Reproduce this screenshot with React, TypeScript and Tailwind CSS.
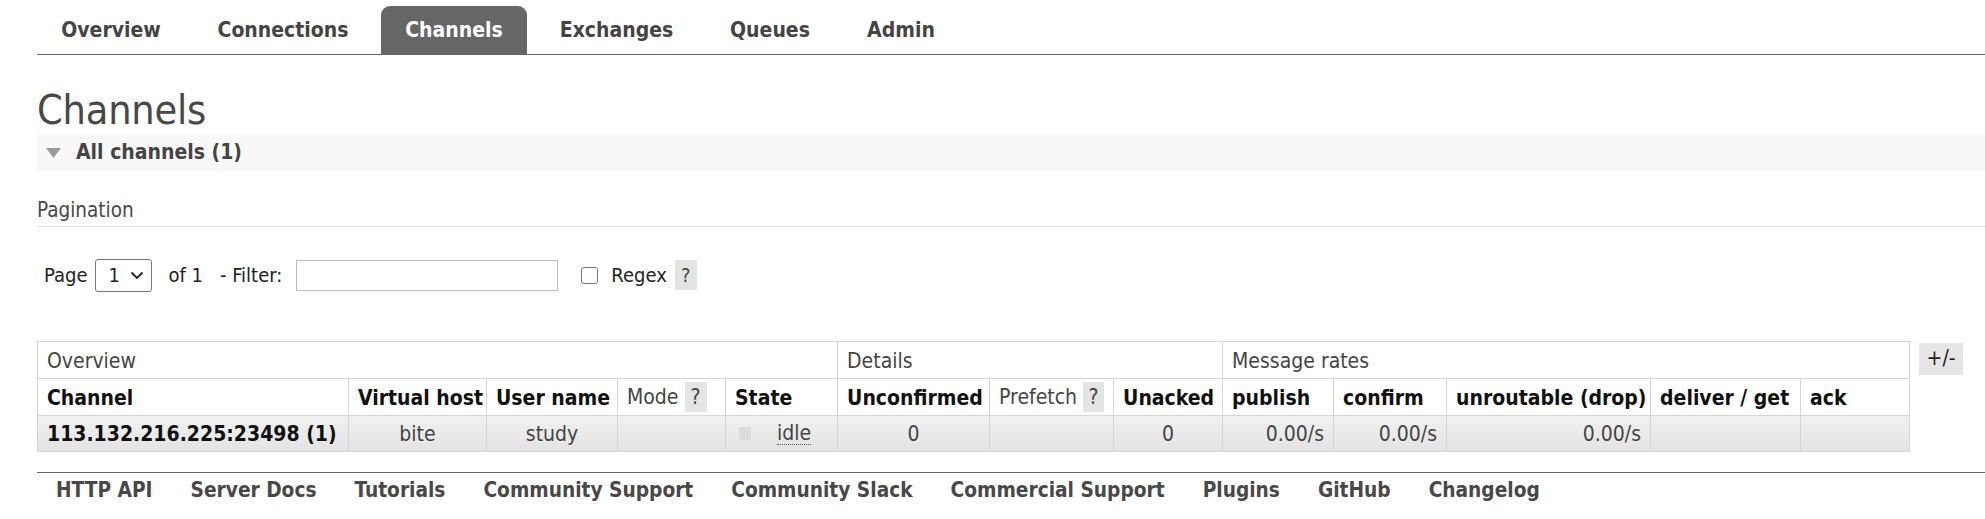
import React from "react";

const tabs = [
  { label: "Overview", w: "w-[148px]" },
  { label: "Connections", w: "w-[178px]" },
  { label: "Channels", w: "w-[146px]", active: true },
  { label: "Exchanges", w: "w-[161px]" },
  { label: "Queues", w: "w-[128px]" },
  { label: "Admin", w: "w-[116px]" },
];

const footer = [
  "HTTP API",
  "Server Docs",
  "Tutorials",
  "Community Support",
  "Community Slack",
  "Commercial Support",
  "Plugins",
  "GitHub",
  "Changelog",
];

function Help() {
  return (
    <span className="inline-flex items-center justify-center w-[22px] h-[30px] bg-[#e4e4e4] text-[#444] font-normal ml-[6px]">
      ?
    </span>
  );
}

export default function App() {
  const cell = "border border-[#d4d4d4] px-[9px]";
  return (
    <div className="min-h-[519px] bg-white text-[#484848] font-['DejaVu_Sans_Condensed','DejaVu_Sans',sans-serif] text-[20px]">
      {/* tabs */}
      <div className="pt-[6px] pl-[37px]">
        <div className="flex gap-[9px] border-b border-[#666]">
          {tabs.map((t) => (
            <div
              key={t.label}
              className={`${t.w} h-[48px] pt-[2px] flex items-center justify-center font-bold text-[21px] rounded-t-[9px] ${
                t.active ? "bg-[#666] text-white" : "text-[#444]"
              }`}
            >
              {t.label}
            </div>
          ))}
        </div>
      </div>

      <div className="pl-[37px]">
        <h1 className="text-[41px] leading-[48px] font-normal text-[#484848] mt-[31px] tracking-[-0.2px]">
          Channels
        </h1>
        <div className="h-[37px] bg-[#f8f8f8] flex items-center">
          <svg width="15" height="10" viewBox="0 0 15 10" className="ml-[9px] mr-[15px]">
            <polygon points="0,0 15,0 7.5,10" fill="#9a9a9a" />
          </svg>
          <span className="font-bold text-[21px] text-[#444]">All channels (1)</span>
        </div>

        <div className="mt-[27px] pb-[4px] border-b border-[#e2e2e2] text-[20.5px] leading-[24px]">
          Pagination
        </div>

        <div className="flex items-center h-[34px] mt-[31px] pl-[7px] text-[20px] text-[#222]">
          <span>Page</span>
          <div className="ml-[8px] w-[57px] h-[33px] border border-[#767676] rounded-[3px] flex items-center pl-[12px] gap-[10px]">
            <span>1</span>
            <svg width="14" height="9" viewBox="0 0 14 9">
              <polyline points="1.5,1.5 7,7 12.5,1.5" fill="none" stroke="#222" strokeWidth="1.8" />
            </svg>
          </div>
          <span className="ml-[16px]">of 1</span>
          <span className="ml-[17px]">- Filter:</span>
          <div className="ml-[14px] w-[262px] h-[31px] border border-[#bdbdbd]" />
          <div className="ml-[23px] w-[17px] h-[17px] border border-[#767676] rounded-[3px]" />
          <span className="ml-[13px]">Regex</span>
          <span className="ml-[8px] inline-flex items-center justify-center w-[22px] h-[30px] bg-[#e4e4e4] text-[#444]">
            ?
          </span>
        </div>

        <div className="flex items-start mt-[49px]">
          <table className="table-fixed border-collapse w-[1872px] text-[21px]">
            <colgroup>
              <col className="w-[311px]" />
              <col className="w-[138px]" />
              <col className="w-[131px]" />
              <col className="w-[108px]" />
              <col className="w-[112px]" />
              <col className="w-[152px]" />
              <col className="w-[124px]" />
              <col className="w-[109px]" />
              <col className="w-[111px]" />
              <col className="w-[113px]" />
              <col className="w-[204px]" />
              <col className="w-[150px]" />
              <col className="w-[109px]" />
            </colgroup>
            <thead>
              <tr className="h-[37px] text-left text-[#444] leading-[28px]">
                <th colSpan={5} className={`${cell} font-normal pt-[1px]`}>Overview</th>
                <th colSpan={3} className={`${cell} font-normal pt-[1px]`}>Details</th>
                <th colSpan={5} className={`${cell} font-normal pt-[1px]`}>Message rates</th>
              </tr>
              <tr className="h-[37px] text-left text-[#111] whitespace-nowrap leading-[28px]">
                <th className={`${cell} font-bold pt-[2px]`}>Channel</th>
                <th className={`${cell} font-bold pt-[2px]`}>Virtual host</th>
                <th className={`${cell} font-bold pt-[2px]`}>User name</th>
                <th className={`${cell} font-normal text-[#444]`}>
                  <span className="flex items-center">Mode<Help /></span>
                </th>
                <th className={`${cell} font-bold pt-[2px]`}>State</th>
                <th className={`${cell} font-bold pt-[2px]`}>Unconfirmed</th>
                <th className={`${cell} font-normal text-[#444]`}>
                  <span className="flex items-center">Prefetch<Help /></span>
                </th>
                <th className={`${cell} font-bold pt-[2px]`}>Unacked</th>
                <th className={`${cell} font-bold pt-[2px]`}>publish</th>
                <th className={`${cell} font-bold pt-[2px]`}>confirm</th>
                <th className={`${cell} font-bold pt-[2px]`}>unroutable (drop)</th>
                <th className={`${cell} font-bold pt-[2px]`}>deliver / get</th>
                <th className={`${cell} font-bold pt-[2px]`}>ack</th>
              </tr>
            </thead>
            <tbody>
              <tr className="h-[36px] bg-gradient-to-b from-[#f1f1f1] to-[#e3e3e3] text-[#444] whitespace-nowrap leading-[28px]">
                <td className={`${cell} font-bold text-[#111]`}>113.132.216.225:23498 (1)</td>
                <td className={`${cell} text-center`}>bite</td>
                <td className={`${cell} text-center`}>study</td>
                <td className={cell}></td>
                <td className={cell}>
                  <span className="flex items-center">
                    <span className="w-[12px] h-[13px] bg-[#dcdcdc] ml-[4px]" />
                    <span className="ml-[26px] border-b border-dotted border-[#555] leading-[22px]">idle</span>
                  </span>
                </td>
                <td className={`${cell} text-center`}>0</td>
                <td className={cell}></td>
                <td className={`${cell} text-center`}>0</td>
                <td className={`${cell} text-right`}>0.00/s</td>
                <td className={`${cell} text-right`}>0.00/s</td>
                <td className={`${cell} text-right`}>0.00/s</td>
                <td className={cell}></td>
                <td className={cell}></td>
              </tr>
            </tbody>
          </table>
          <div className="ml-[9px] mt-[2px] w-[44px] h-[32px] bg-[#e6e6e6] flex items-center justify-center text-[21px] text-[#222]">
            +/-
          </div>
        </div>

        <div className="mt-[20px] border-t border-[#666] flex pt-[5px]">
          {footer.map((f) => (
            <span key={f} className="px-[19px] font-bold text-[20.7px] text-[#484848] leading-[24px]">
              {f}
            </span>
          ))}
        </div>
      </div>
    </div>
  );
}
